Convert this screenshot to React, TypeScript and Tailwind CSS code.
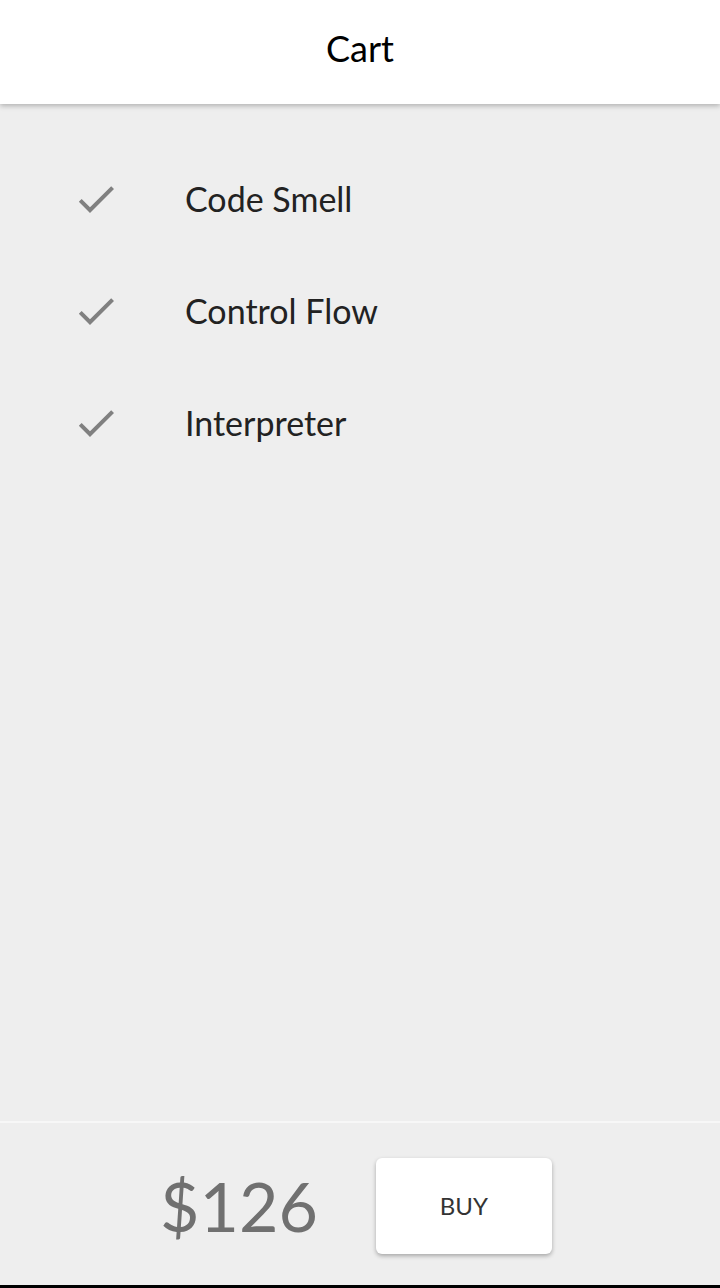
import { useState } from 'react'

const items = ['Code Smell', 'Control Flow', 'Interpreter']

function Check() {
  return (
    <svg viewBox="0 0 24 24" className="mt-[2px] h-12 w-12 shrink-0" fill="#808080">
      <path d="M9 16.17L4.83 12l-1.42 1.41L9 19 21 7l-1.41-1.41z" />
    </svg>
  )
}

export default function App() {
  const [total] = useState(126)

  return (
    <div
      className="flex h-[1288px] w-[720px] flex-col bg-[#eeeeee]"
      style={{ fontFamily: 'Lato, "Open Sans", sans-serif' }}
    >
      <header className="relative z-10 flex h-[104px] shrink-0 items-center justify-center bg-white pb-2 shadow-[0_2px_5px_rgba(0,0,0,0.25)]">
        <h1 className="text-[36px] text-black">Cart</h1>
      </header>

      <main className="flex-1 pt-[38px]">
        {items.map((name) => (
          <div key={name} className="flex h-[112px] items-center pl-[72px]">
            <Check />
            <span className="ml-[65px] text-[34px] text-[#222222]">{name}</span>
          </div>
        ))}
      </main>

      <footer className="flex h-[164px] shrink-0 items-center justify-center gap-[58px] border-t-2 border-[#f7f7f7] pt-1 pr-2">
        <span className="text-[68px] leading-none text-[#707070]">${total}</span>
        <button className="flex h-[96px] w-[176px] items-center justify-center rounded-md bg-white text-[24px] text-[#333333] shadow-[0_2px_4px_rgba(0,0,0,0.3)]">
          BUY
        </button>
      </footer>
      <div className="h-[3px] shrink-0 bg-black" />
    </div>
  )
}
